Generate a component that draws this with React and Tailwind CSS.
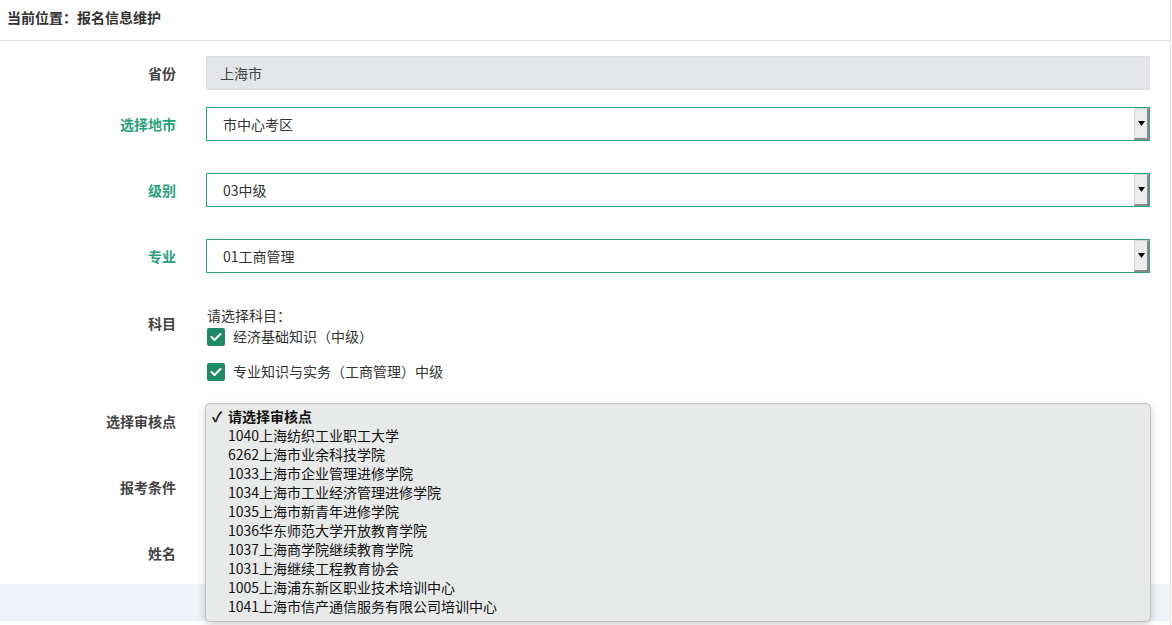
import React from "react";

const font = { fontFamily: '"Noto Sans CJK SC", "Noto Sans", sans-serif' };

function Arrow() {
  return (
    <div className="absolute right-0 top-0 h-full w-[15px] bg-[#ececec] border-l border-t border-l-[#d4d4d4] border-t-[#d4d4d4] border-r-2 border-b-2 border-r-[#8a8a8a] border-b-[#8a8a8a] flex items-center justify-center">
      <svg width="7" height="5" viewBox="0 0 7 5"><path d="M0 0h7L3.5 5z" fill="#000" /></svg>
    </div>
  );
}

function Label({ children, green }) {
  return (
    <div className={`w-[176px] text-right text-[14px] font-bold ${green ? "text-[#27a17b]" : "text-[#444]"}`}>
      {children}
    </div>
  );
}

function SelectRow({ label, value, className }) {
  return (
    <div className={`flex items-center gap-[30px] ${className}`}>
      <Label green>{label}</Label>
      <div className="relative w-[944px] h-[34px] border border-[#2fa282] bg-white flex items-center pl-[16px] text-[14px] text-[#333]">
        {value}
        <Arrow />
      </div>
    </div>
  );
}

function Check({ text, className }) {
  return (
    <div className={`flex items-center gap-[8px] ${className}`}>
      <div className="w-[18px] h-[18px] rounded-[2px] bg-[#1f8a68] flex items-center justify-center">
        <svg width="12" height="10" viewBox="0 0 12 10"><path d="M1.5 5l3 3 6-6" stroke="#fff" strokeWidth="2" fill="none" strokeLinecap="round" strokeLinejoin="round" /></svg>
      </div>
      <span className="text-[14px] text-[#333]">{text}</span>
    </div>
  );
}

const options = [
  "1040上海纺织工业职工大学",
  "6262上海市业余科技学院",
  "1033上海市企业管理进修学院",
  "1034上海市工业经济管理进修学院",
  "1035上海市新青年进修学院",
  "1036华东师范大学开放教育学院",
  "1037上海商学院继续教育学院",
  "1031上海继续工程教育协会",
  "1005上海浦东新区职业技术培训中心",
  "1041上海市信产通信服务有限公司培训中心",
];

export default function App() {
  return (
    <div style={font} className="w-[1171px] min-h-[625px] bg-white border-r border-[#e6e6e6]">
      <div className="h-[41px] border-b border-[#e3e3e3] flex items-center pl-[7px] pb-[5px] text-[14px] font-bold text-[#333]">
        当前位置：报名信息维护
      </div>

      <div className="flex items-center gap-[30px] mt-[15px]">
        <Label>省份</Label>
        <div className="w-[944px] h-[34px] bg-[#e3e5e8] border border-[#dcdee1] flex items-center pl-[13px] text-[14px] text-[#444]">
          上海市
        </div>
      </div>

      <SelectRow label="选择地市" value="市中心考区" className="mt-[17px]" />
      <SelectRow label="级别" value="03中级" className="mt-[32px]" />
      <SelectRow label="专业" value="01工商管理" className="mt-[32px]" />

      <div className="flex gap-[30px] mt-[32px]">
        <div className="pt-[8px]"><Label>科目</Label></div>
        <div className="pl-[1px]">
          <div className="text-[14px] leading-[20px] text-[#333]">请选择科目：</div>
          <Check text="经济基础知识（中级）" className="mt-[1px]" />
          <Check text="专业知识与实务（工商管理）中级" className="mt-[14px]" />
        </div>
      </div>

      <div className="flex items-center gap-[30px] mt-[22px]">
        <Label>选择审核点</Label>
        <div className="relative w-[944px] h-[34px]">
          <div className="absolute left-[-1px] top-[-1px] z-10 w-[946px] h-[219px] rounded-[5px] border border-[#c2c2c2] bg-[#e8e9e9] shadow-[0_3px_8px_rgba(0,0,0,0.18)] pt-[3px] text-[14px] text-[#111] leading-[19px]">
            <div className="flex">
              <span className="w-[22px] pl-[6px] font-bold">✓</span>
              <span className="font-bold">请选择审核点</span>
            </div>
            {options.map((o) => (
              <div key={o} className="pl-[22px]">{o}</div>
            ))}
          </div>
        </div>
      </div>

      <div className="flex items-center gap-[30px] mt-[32px] h-[34px]">
        <Label>报考条件</Label>
      </div>

      <div className="flex items-center gap-[30px] mt-[32px] h-[34px]">
        <Label>姓名</Label>
      </div>

      <div className="mt-[14px] h-[37px] bg-[#eff2f6]" />
    </div>
  );
}
